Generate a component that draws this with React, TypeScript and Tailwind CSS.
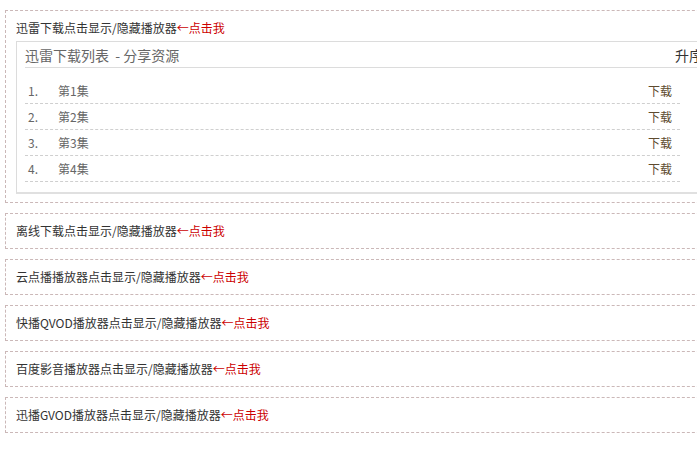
const episodes = ["第1集", "第2集", "第3集", "第4集"];

const players = [
  "离线下载",
  "云点播播放器",
  "快播QVOD播放器",
  "百度影音播放器",
  "迅播GVOD播放器",
];

function Toggle({ name }: { name: string }) {
  return (
    <p className="text-[12px] leading-[18px] text-[#333]">
      {name}点击显示/隐藏播放器<span className="text-[#c00]">←点击我</span>
    </p>
  );
}

export default function App() {
  return (
    <div className="w-[697px] h-[457px] overflow-hidden bg-white font-['Microsoft_YaHei','Noto_Sans_CJK_SC',sans-serif]">
      <div className="ml-[5px] pt-[10px] w-[730px] flex flex-col gap-[10px]">
        <div className="border border-dashed border-[#cbb8b8] px-[10px] py-[8px]">
          <Toggle name="迅雷下载" />
          <div className="mt-[4px] w-[696px] border border-[#dcdcdc] border-b-2 border-b-[#e0e0e0] px-[8px] pb-[10px]">
            <div className="flex justify-between h-[26px] leading-[26px] border-b border-[#dcdcdc] text-[14px]">
              <span className="text-[#666]">迅雷下载列表&nbsp;&nbsp;- 分享资源</span>
              <span className="text-[#333]">升序</span>
            </div>
            <ul className="pt-[10px] w-[655px]">
              {episodes.map((ep, i) => (
                <li
                  key={ep}
                  className="flex items-center h-[26px] border-b border-dashed border-[#cfcfcf] text-[12px] text-[#666]"
                >
                  <span className="w-[33px] pl-[3px]">{i + 1}.</span>
                  <span className="flex-1">{ep}</span>
                  <span className="pr-[8px] text-[#5e4b2f]">下载</span>
                </li>
              ))}
            </ul>
          </div>
        </div>
        {players.map((p) => (
          <div key={p} className="border border-dashed border-[#cbb8b8] px-[10px] py-[8px]">
            <Toggle name={p} />
          </div>
        ))}
      </div>
    </div>
  );
}
